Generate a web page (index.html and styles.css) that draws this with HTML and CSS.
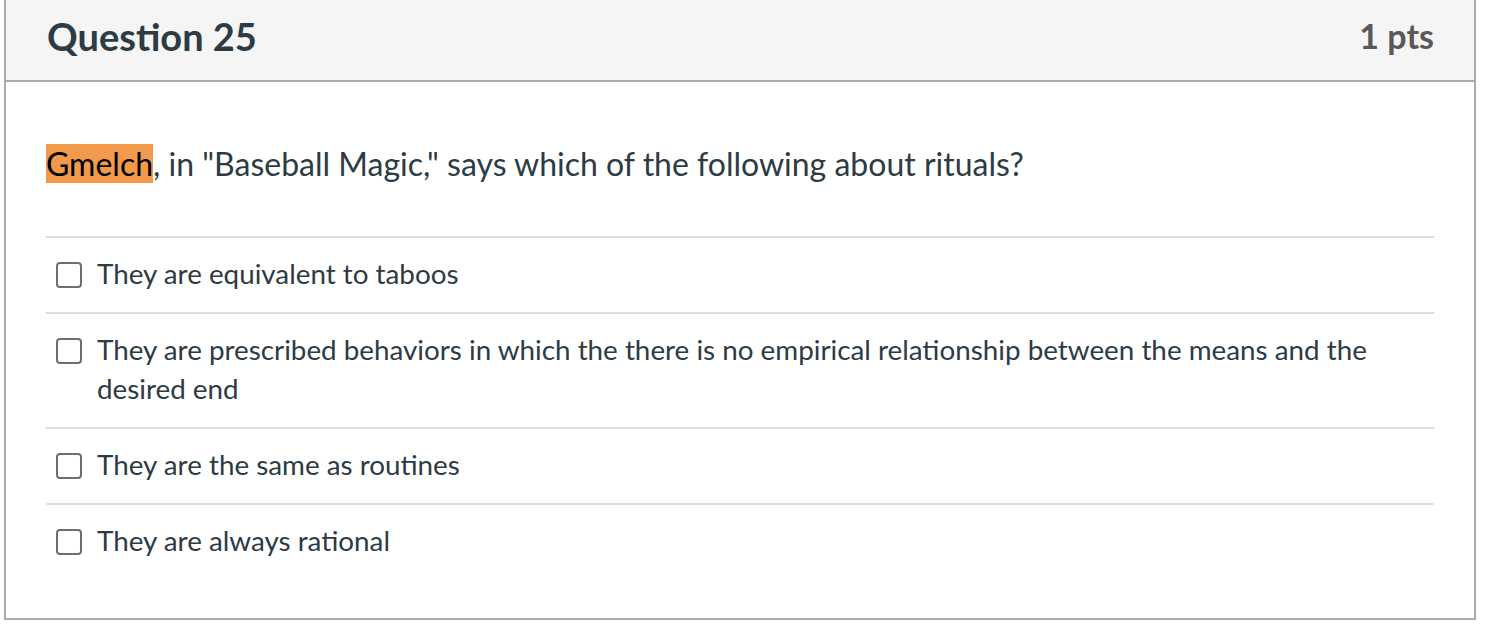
FILE: index.html
```html
<!DOCTYPE html>
<html>
<head>
<meta charset="utf-8">
<link rel="stylesheet" href="styles.css">
</head>
<body>
<div class="question">
  <div class="header">
    <h2 class="title">Question 25</h2>
    <span class="pts">1 pts</span>
  </div>
  <div class="body">
    <p class="prompt"><span class="hl">Gmelch</span>, in "Baseball Magic," says which of the following about rituals?</p>
    <div class="answers">
      <label class="answer"><span class="box"></span><span class="atext">They are equivalent to taboos</span></label>
      <label class="answer"><span class="box"></span><span class="atext">They are prescribed behaviors in which the there is no empirical relationship between the means and the desired end</span></label>
      <label class="answer"><span class="box"></span><span class="atext">They are the same as routines</span></label>
      <label class="answer"><span class="box"></span><span class="atext">They are always rational</span></label>
    </div>
  </div>
</div>
</body>
</html>
```

FILE: styles.css
```css
html, body {
  margin: 0;
  padding: 0;
  background: #fff;
}
body {
  font-family: Lato, "Open Sans", sans-serif;
  color: #2d3b45;
}
.question {
  margin-left: 4px;
  width: 1468px;
  border: 2px solid #aaaaaa;
  border-top: none;
}
.header {
  height: 80px;
  background: #f5f5f5;
  border-bottom: 2px solid #aaaaaa;
  display: flex;
  align-items: center;
  justify-content: space-between;
  padding: 0 40px 0 41px;
}
.title {
  margin: 0;
  font-size: 38px;
  font-weight: 700;
  color: #2d3b45;
  position: relative;
  top: -4px;
}
.pts {
  font-size: 34px;
  font-weight: 700;
  color: #595959;
  position: relative;
  top: -5px;
}
.body {
  padding: 62px 40px 39px 40px;
}
.prompt {
  margin: 0 0 53px 0;
  font-size: 32px;
  line-height: 39px;
}
.hl {
  background: #f39a4a;
  color: #000;
  display: inline-block;
  line-height: 39px;
}
.answers {
  border-top: 2px solid #dddddd;
}
.answer {
  display: flex;
  align-items: flex-start;
  padding: 16px 0 19px 10px;
  border-bottom: 2px solid #dddddd;
  font-size: 27.8px;
  line-height: 39px;
}
.answer:last-child {
  border-bottom: none;
}
.box {
  flex: none;
  width: 22px;
  height: 22px;
  border: 2px solid #6e6e6e;
  border-radius: 4px;
  margin-top: 8px;
  margin-right: 15px;
  background: #fff;
}
.atext {
  display: block;
}
```
